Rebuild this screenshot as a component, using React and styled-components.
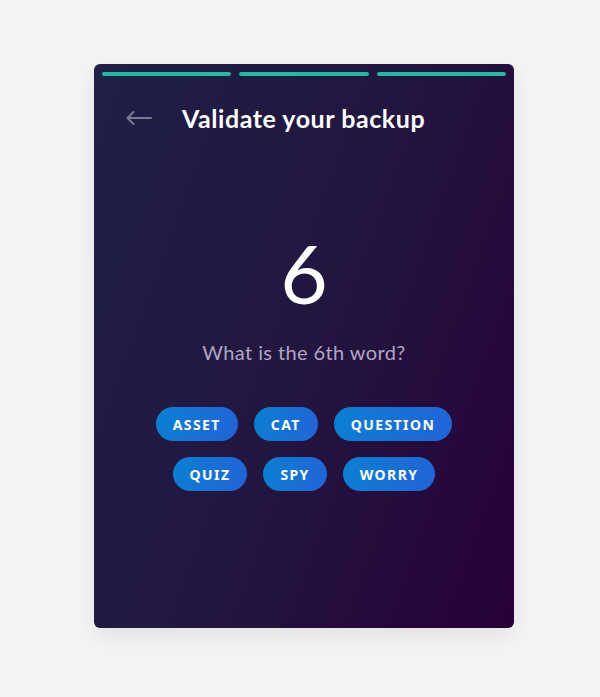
import React from 'react'
import styled, { createGlobalStyle } from 'styled-components'

const words = [
    ['ASSET', 'CAT', 'QUESTION'],
    ['QUIZ', 'SPY', 'WORRY'],
]

export default function App() {
    return (
        <Page>
            <GlobalStyle />
            <Card>
                <Progress>
                    <Step />
                    <Step />
                    <Step />
                </Progress>
                <Header>
                    <BackButton aria-label="Back">
                        <svg width="26" height="14" viewBox="0 0 26 14" fill="none">
                            <path d="M1.5 7H25M1.5 7L7.5 1M1.5 7l6 6" stroke="#7b7896" strokeWidth="2" strokeLinecap="round" strokeLinejoin="round" />
                        </svg>
                    </BackButton>
                    <Title>Validate your backup</Title>
                </Header>
                <Body>
                    <Number>6</Number>
                    <Question>What is the 6th word?</Question>
                    <Choices>
                        {words.map((row, i) => (
                            <ChoiceRow key={'r' + i}>
                                {row.map(w => <Choice key={w}>{w}</Choice>)}
                            </ChoiceRow>
                        ))}
                    </Choices>
                </Body>
            </Card>
        </Page>
    )
}

const GlobalStyle = createGlobalStyle`
    html, body {
        margin: 0;
        padding: 0;
        background: #f4f4f4;
        font-family: Lato, "Open Sans", sans-serif;
    }
`
const Page = styled.div`
    width: 600px;
    height: 697px;
    display: flex;
    justify-content: center;
    padding: 64px 0 0 8px;
    box-sizing: border-box;
`
const Card = styled.div`
    width: 420px;
    height: 564px;
    border-radius: 6px;
    background: linear-gradient(110deg, #1f1f47 0%, #22163f 50%, #27003a 100%);
    box-shadow: 0 8px 24px rgba(0, 0, 0, 0.08);
    display: flex;
    flex-direction: column;
    padding: 8px 8px 0;
    box-sizing: border-box;
`
const Progress = styled.div`
    display: flex;
    gap: 8px;
`
const Step = styled.div`
    flex: 1;
    height: 4px;
    border-radius: 2px;
    background: #1fbba6;
`
const Header = styled.div`
    display: flex;
    align-items: center;
    padding: 24px 0 0 24px;
    height: 36px;
`
const BackButton = styled.button`
    border: none;
    background: none;
    padding: 0;
    width: 26px;
    display: flex;
    align-items: center;
    cursor: pointer;
    margin-right: 30px;
`
const Title = styled.h1`
    margin: 0;
    color: #fff;
    font-size: 25px;
    font-weight: 700;
    letter-spacing: 0.55px;
`
const Body = styled.div`
    display: flex;
    flex-direction: column;
    align-items: center;
    padding-top: 95px;
`
const Number = styled.div`
    color: #fff;
    font-size: 82px;
    font-weight: 400;
    line-height: 82px;
`
const Question = styled.div`
    margin-top: 27px;
    color: #b0a6c4;
    font-size: 20px;
    letter-spacing: 0.4px;
`
const Choices = styled.div`
    margin-top: 43px;
    display: flex;
    flex-direction: column;
    gap: 16px;
    align-items: center;
`
const ChoiceRow = styled.div`
    display: flex;
    gap: 16px;
`
const Choice = styled.button`
    height: 34px;
    padding: 0 17px;
    border: none;
    border-radius: 17px;
    background: linear-gradient(100deg, #0a80d2 0%, #2263d8 100%);
    color: #fff;
    font-family: "Noto Sans", "Open Sans", sans-serif;
    font-weight: 700;
    font-size: 14px;
    letter-spacing: 1.4px;
    cursor: pointer;
`
